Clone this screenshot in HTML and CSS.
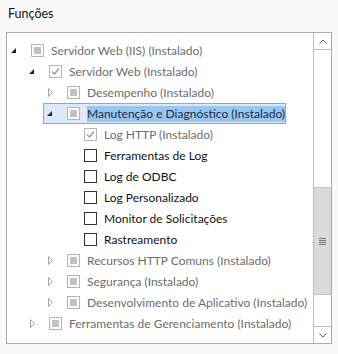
FILE: index.html
```html
<!DOCTYPE html>
<html lang="pt">
<head>
    <meta charset="UTF-8">
    <title>Funções</title>
    <link rel="stylesheet" href="styles.css">
</head>
<body>
    <h1 class="title">Funções</h1>
    <div class="box">
        <div class="tree">
            <div class="row lvl0">
                <span class="item"><span class="exp open"><svg width="6" height="6"><polygon points="5,0 5,5 0,5" fill="#222"/></svg></span><span class="cb part"></span><span class="label dim">Servidor Web (IIS) (Instalado)</span></span>
            </div>
            <div class="row lvl1">
                <span class="item"><span class="exp open"><svg width="6" height="6"><polygon points="5,0 5,5 0,5" fill="#222"/></svg></span><span class="cb check dis"><svg width="11" height="11"><polyline points="2,5.5 4.5,8 9,2.5" fill="none" stroke="#9a9a9a" stroke-width="1.4"/></svg></span><span class="label dim">Servidor Web (Instalado)</span></span>
            </div>
            <div class="row lvl2">
                <span class="item"><span class="exp closed"><svg width="6" height="10"><polygon points="0.5,0.5 4.5,4.5 0.5,8.5" fill="none" stroke="#a6a6a6"/></svg></span><span class="cb part"></span><span class="label dim">Desempenho (Instalado)</span></span>
            </div>
            <div class="row lvl2">
                <span class="item sel"><span class="exp open"><svg width="6" height="6"><polygon points="5,0 5,5 0,5" fill="#222"/></svg></span><span class="cb part"></span><span class="label hl">Manutenção e Diagnóstico (Instalado)</span></span>
            </div>
            <div class="row lvl3">
                <span class="item"><span class="cb check dis"><svg width="11" height="11"><polyline points="2,5.5 4.5,8 9,2.5" fill="none" stroke="#9a9a9a" stroke-width="1.4"/></svg></span><span class="label dim">Log HTTP (Instalado)</span></span>
            </div>
            <div class="row lvl3">
                <span class="item"><span class="cb"></span><span class="label">Ferramentas de Log</span></span>
            </div>
            <div class="row lvl3">
                <span class="item"><span class="cb"></span><span class="label">Log de ODBC</span></span>
            </div>
            <div class="row lvl3">
                <span class="item"><span class="cb"></span><span class="label">Log Personalizado</span></span>
            </div>
            <div class="row lvl3">
                <span class="item"><span class="cb"></span><span class="label">Monitor de Solicitações</span></span>
            </div>
            <div class="row lvl3">
                <span class="item"><span class="cb"></span><span class="label">Rastreamento</span></span>
            </div>
            <div class="row lvl2">
                <span class="item"><span class="exp closed"><svg width="6" height="10"><polygon points="0.5,0.5 4.5,4.5 0.5,8.5" fill="none" stroke="#a6a6a6"/></svg></span><span class="cb part"></span><span class="label dim">Recursos HTTP Comuns (Instalado)</span></span>
            </div>
            <div class="row lvl2">
                <span class="item"><span class="exp closed"><svg width="6" height="10"><polygon points="0.5,0.5 4.5,4.5 0.5,8.5" fill="none" stroke="#a6a6a6"/></svg></span><span class="cb part"></span><span class="label dim">Segurança (Instalado)</span></span>
            </div>
            <div class="row lvl2">
                <span class="item"><span class="exp closed"><svg width="6" height="10"><polygon points="0.5,0.5 4.5,4.5 0.5,8.5" fill="none" stroke="#a6a6a6"/></svg></span><span class="cb part"></span><span class="label dim">Desenvolvimento de Aplicativo (Instalado)</span></span>
            </div>
            <div class="row lvl1">
                <span class="item"><span class="exp closed"><svg width="6" height="10"><polygon points="0.5,0.5 4.5,4.5 0.5,8.5" fill="none" stroke="#a6a6a6"/></svg></span><span class="cb part"></span><span class="label dim">Ferramentas de Gerenciamento (Instalado)</span></span>
            </div>
        </div>
        <div class="scrollbar">
            <div class="sb-btn up"><svg width="8" height="5"><polyline points="0.5,4.5 4,1 7.5,4.5" fill="none" stroke="#606060"/></svg></div>
            <div class="sb-track">
                <div class="sb-space top"></div>
                <div class="sb-thumb">
                    <svg width="7" height="7"><path d="M0 0.5h7M0 2.5h7M0 4.5h7M0 6.5h7" stroke="#777"/></svg>
                </div>
                <div class="sb-space bottom"></div>
            </div>
            <div class="sb-btn down"><svg width="8" height="5"><polyline points="0.5,0.5 4,4 7.5,0.5" fill="none" stroke="#606060"/></svg></div>
        </div>
    </div>
</body>
</html>
```

FILE: styles.css
```css
body {
    margin: 0;
    background-color: #f9f9f9;
    font-family: 'Lato', 'Noto Sans', sans-serif;
    font-size: 12px;
    color: #1e1e1e;
}
.title {
    font-size: 12.5px;
    font-weight: normal;
    margin: 0;
    padding: 6px 0 0 8px;
    height: 32px;
    box-sizing: border-box;
    line-height: 16px;
    color: #111;
}
.box {
    display: flex;
    margin-left: 6px;
    width: 326px;
    height: 312px;
    box-sizing: border-box;
    border: 1px solid #acacac;
    background-color: #fff;
}
.tree {
    flex: 1;
    padding-top: 7px;
    overflow: hidden;
}
.row {
    height: 21px;
    display: flex;
    align-items: center;
    white-space: nowrap;
}
.lvl0 { padding-left: 0; }
.lvl1 { padding-left: 18px; }
.lvl2 { padding-left: 36px; }
.lvl3 { padding-left: 76px; }
.item {
    display: inline-flex;
    align-items: center;
    height: 21px;
    box-sizing: border-box;
    border: 1px solid transparent;
}
.item.sel {
    background-color: #dbe9fb;
    border-color: #80a9dc;
}
.exp {
    width: 23px;
    height: 12px;
    display: flex;
    align-items: center;
    padding-left: 2px;
    box-sizing: border-box;
}
.exp.open { padding-left: 3px; }
.exp.closed { padding-left: 4px; }
.exp svg { display: block; }
.cb {
    width: 13px;
    height: 13px;
    box-sizing: border-box;
    border: 1px solid #333;
    background-color: #fff;
    margin-right: 7px;
    display: flex;
    align-items: center;
    justify-content: center;
    flex: none;
}
.cb.part, .cb.dis {
    border-color: #b4b4b4;
}
.cb.part::after {
    content: '';
    width: 7px;
    height: 7px;
    background-color: #c2c2c2;
}
.cb svg { display: block; }
.label {
    line-height: 16px;
    color: #111;
}
.label.dim {
    color: #6d6d6d;
}
.label.hl {
    background-color: #99c6f1;
    color: #1a2a44;
}
.scrollbar {
    width: 17px;
    display: flex;
    flex-direction: column;
    border-left: 1px solid #bcbcbc;
    background-color: #fff;
}
.sb-btn {
    height: 16px;
    display: flex;
    align-items: center;
    justify-content: center;
    flex: none;
}
.sb-btn.up { border-bottom: 1px solid #bcbcbc; }
.sb-btn.down { border-top: 1px solid #bcbcbc; }
.sb-btn svg { display: block; }
.sb-track {
    flex: 1;
    display: flex;
    flex-direction: column;
}
.sb-space.top { height: 137px; }
.sb-space.bottom { flex: 1; }
.sb-thumb {
    height: 108px;
    background-color: #dadada;
    border-top: 1px solid #c4c4c4;
    border-bottom: 1px solid #c4c4c4;
    display: flex;
    align-items: center;
    justify-content: center;
    box-sizing: border-box;
}
.sb-thumb svg { display: block; }
```
